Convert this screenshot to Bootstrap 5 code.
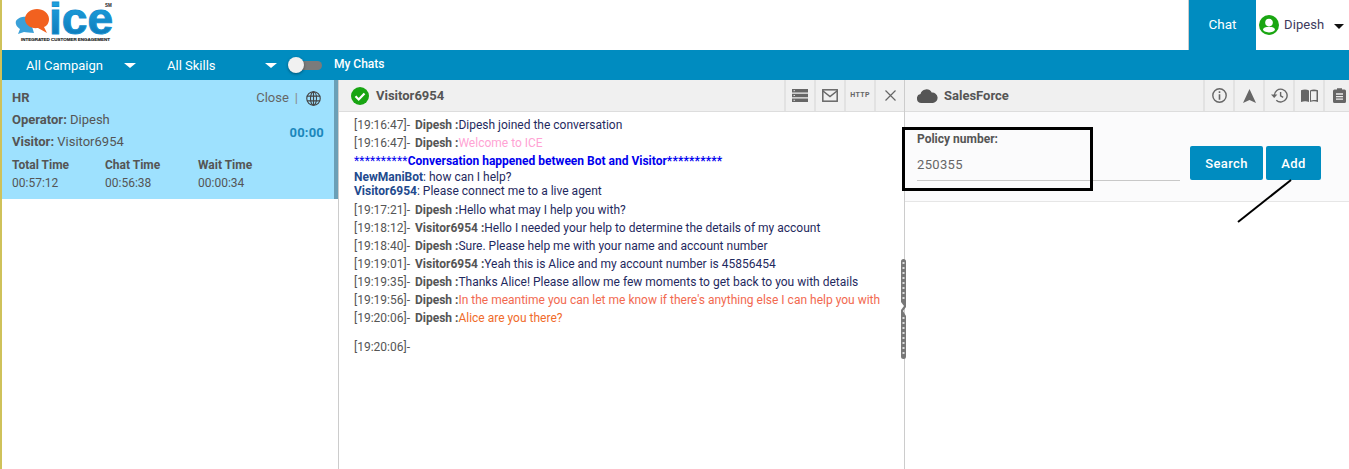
<!DOCTYPE html>
<html lang="en"><head><meta charset="utf-8"><title>ICE Chat</title>
<link rel="stylesheet" href="https://cdn.jsdelivr.net/npm/bootstrap@5.3.0/dist/css/bootstrap.min.css">
<style>
html,body{height:100%;overflow:hidden}
body{font-family:Roboto,"Liberation Sans",sans-serif;font-size:12px;color:#555;background:#fff;border-left:2px solid #cfc25a}
.app-shell{height:469px;position:relative}
.top-bar{height:50px;background:#fff}
.logo-box{width:130px;height:50px;margin-left:-2px}
.chat-tab{width:68px;background:#008cc0;color:#fff;font-size:13.5px;border-left:1px solid #ccc;padding-top:14px;text-align:center;line-height:20px}
.user-box{width:93px;font-size:13px;letter-spacing:.1px;color:#3d3a5c;padding-left:3px}
.user-name{margin-left:5px}
.caret-dark{width:0;height:0;border-left:5px solid transparent;border-right:5px solid transparent;border-top:5px solid #111;margin-left:10px;margin-top:2px}
.filter-bar{height:30px;background:#008cc0;color:#fff;font-size:13px;position:relative}
.flt-label{margin-top:2px}
.caret-white{width:0;height:0;border-left:6px solid transparent;border-right:6px solid transparent;border-top:5px solid #fff}
.toggle-track{width:26px;height:9px;border-radius:5px;background:#7b7b7b;position:relative}
.toggle-knob{position:absolute;left:-8px;top:-3.5px;width:16px;height:16px;border-radius:50%;background:#f1f1f1;box-shadow:0 1px 3px rgba(0,0,0,.4)}
.mychats{font-size:12px;font-weight:500;margin-left:12px;margin-top:-3px}
.panes{height:389px}
.left-pane{width:337px;flex:none;border-right:1px solid #ccc;height:389px}
.visitor-card{height:119px;background:#9ee1fe;border-right:4px solid #6b9fb6;position:relative;padding:9px 10px;line-height:18px}
.visitor-card b{font-weight:700}
.row-line{height:22px;line-height:18px;font-size:13px}
.close-link{position:absolute;right:13px;top:9px;color:#666;font-size:13px;display:flex;align-items:center}
.sep-bar{color:#888;margin:0 8px 0 6px}
.timer{position:absolute;right:10px;top:44px;font-weight:700;font-size:13px;color:#1b87bb;letter-spacing:.2px}
.time-grid{display:grid;grid-template-columns:93px 93px 93px;margin-top:1px;font-size:12px;line-height:18px}
.mid-pane{width:566px;flex:none;border-right:1px solid #ccc;height:389px;position:relative}
.right-pane{flex:1;height:389px;min-width:0}
.pane-head{height:32px;background:#f0f0f0;border-bottom:1px solid #ddd;font-weight:700;font-size:13px;color:#555}
.head-icon{width:30px;height:31px;border-left:2px solid #e2e2e2;flex:none}
.tools-clip{margin-right:-4px}
.chat-log{padding:4px 0 0 15px;font-size:12px;line-height:18px;color:#1f2a60;position:relative}
.msg-t{color:#555}
.msg-n{color:#555;font-weight:700;margin-left:2px}
.msg{height:18px;white-space:nowrap}
.blue-line{color:#0000ee;font-weight:700;height:18px;line-height:18px}
.blue-line i{font-style:normal;font-weight:400;letter-spacing:.2px}
.blue-line em{font-style:normal;letter-spacing:.1px}
.bot-line{line-height:14px;height:14px}
.bot-line b{color:#224a8e}
.pink{color:#ffa3d4}.sal1{color:#f2694f}.sal2{color:#f06b2a}
.search-form{height:90px;background:#fbfbfc;border-bottom:1px solid #e6e6e6;position:relative;padding:18px 12px 0 12px}
.form-label-x{font-weight:700;font-size:12px;color:#555;line-height:18px;margin:0}
.input-x{width:263px;height:33px;border-bottom:1px solid #c8c8c8;font-size:13px;line-height:26px;color:#666;padding-top:4px;letter-spacing:.35px}
.btn-x{background:#008cc0;color:#fff;font-size:13px;font-weight:500;border:0;border-radius:2px;height:34px;padding:2px 0 0;letter-spacing:.35px}
.btn-x:hover{background:#008cc0;color:#fff}
.btn-s{width:73px}.btn-a{width:55px;margin-left:3px}
.annot-box{position:absolute;left:-3px;top:15px;width:191px;height:64px;border:3px solid #000;pointer-events:none}
.annot-line{position:absolute;left:328px;top:66px;pointer-events:none}
.grip{right:-3px;top:179px}
</style></head>
<body>
<div class="app-shell">
 <div class="top-bar d-flex">
  <div class="logo-box">
   <svg width="130" height="50" viewBox="0 0 130 50">
    <path d="M16 21c2-4 8-5 13-4l5 16c-4 0-8-1-10-1l-6 2 2-5c-3-2-5-5-4-8z" fill="#3aa0d8"/>
    <path d="M25 19c0-6 6-10 12-10 6 0 12 4 12 10 0 4-2 7-5 8l3 6-9-5c-7 1-13-3-13-9z" fill="#f2611f"/>
    <defs><linearGradient id="ig" x1="0" y1="0" x2="0" y2="1"><stop offset="0" stop-color="#23ace8"/><stop offset="1" stop-color="#0a72b2"/></linearGradient></defs>
    <text x="49" y="33.5" font-family="Liberation Sans" font-weight="700" font-size="44" fill="url(#ig)" stroke="#1590d0" stroke-width="1" textLength="64" lengthAdjust="spacingAndGlyphs">ice</text>
    <text x="105" y="7" font-family="Liberation Sans" font-weight="700" font-size="4.5" fill="#222">SM</text>
    <text x="21" y="41" font-family="Liberation Sans" font-weight="700" font-size="4.2" fill="#222" stroke="#222" stroke-width=".15" textLength="89" lengthAdjust="spacingAndGlyphs">INTEGRATED CUSTOMER ENGAGEMENT</text>
   </svg>
  </div>
  <div class="ms-auto d-flex">
   <div class="chat-tab">Chat</div>
   <div class="user-box d-flex align-items-center">
    <svg width="20" height="20" viewBox="0 0 20 20"><circle cx="10" cy="10" r="10" fill="#1aa612"/><circle cx="10" cy="7.6" r="3.8" fill="#fff"/><ellipse cx="10" cy="14.6" rx="6" ry="2.8" fill="#fff"/></svg>
    <span class="user-name">Dipesh</span><span class="caret-dark"></span>
   </div>
  </div>
 </div>
 <div class="filter-bar d-flex align-items-center">
  <span class="flt-label" style="margin-left:24px;width:98px">All Campaign</span><span class="caret-white"></span>
  <span class="flt-label" style="margin-left:31px;width:98px">All Skills</span><span class="caret-white"></span>
  <span class="toggle-track" style="margin-left:19px"><span class="toggle-knob"></span></span>
  <span class="mychats">My Chats</span>
 </div>
 <div class="panes d-flex">
  <div class="left-pane">
   <div class="visitor-card">
    <div class="row-line"><b>HR</b></div>
    <div class="row-line"><b>Operator:</b> Dipesh</div>
    <div class="row-line"><b>Visitor:</b> Visitor6954</div>
    <div class="close-link">Close<span class="sep-bar">|</span>
     <svg width="15" height="15" viewBox="0 0 16 16" fill="none" stroke="#444" stroke-width="1.2"><circle cx="8" cy="8" r="7.2"/><ellipse cx="8" cy="8" rx="3.2" ry="7.2"/><path d="M8 .8v14.4M1 5.5h14M1 10.5h14"/></svg>
    </div>
    <div class="timer">00:00</div>
    <div class="time-grid"><b>Total Time</b><b>Chat Time</b><b>Wait Time</b><span>00:57:12</span><span>00:56:38</span><span>00:00:34</span></div>
   </div>
  </div>
  <div class="mid-pane">
   <div class="pane-head d-flex align-items-center">
    <svg style="margin-left:12px;margin-right:7px" width="18" height="18" viewBox="0 0 18 18"><circle cx="9" cy="9" r="9" fill="#18a512"/><path d="M4.5 9.3l3.2 3.2 5.8-6" fill="none" stroke="#fff" stroke-width="2.2"/></svg>
    <span>Visitor6954</span>
    <div class="ms-auto d-flex">
     <div class="head-icon d-flex align-items-center justify-content-center"><svg width="16" height="13" viewBox="0 0 16 13"><path fill="#666" d="M0 0h16v3.4H0zM0 4.8h16v3.4H0zM0 9.6h16V13H0z"/><path stroke="#ddd" d="M1.5 1.7h1.5M1.5 6.5h1.5M1.5 11.3h1.5"/></svg></div>
     <div class="head-icon d-flex align-items-center justify-content-center"><svg width="16" height="13" viewBox="0 0 16 13" fill="none" stroke="#666" stroke-width="1.5"><rect x=".8" y=".8" width="14.4" height="11.4"/><path d="M1 2l7 5.5L15 2"/></svg></div>
     <div class="head-icon d-flex align-items-center justify-content-center" style="font-size:7px;font-weight:700;letter-spacing:.4px;color:#666">HTTP</div>
     <div class="head-icon d-flex align-items-center justify-content-center"><svg width="13" height="13" viewBox="0 0 13 13" stroke="#666" stroke-width="1.2"><path d="M1.5 1.5l10 10M11.5 1.5l-10 10"/></svg></div>
    </div>
   </div>
   <div class="chat-log">
    <div class="msg"><span class="msg-t">[19:16:47]-</span> <span class="msg-n">Dipesh :</span>Dipesh joined the conversation</div>
    <div class="msg"><span class="msg-t">[19:16:47]-</span> <span class="msg-n">Dipesh :</span><span class="pink">Welcome to ICE</span></div>
    <div class="blue-line"><i>**********</i>Conversation happened between Bot and Visitor<em>**********</em></div>
    <div class="bot-line"><b>NewManiBot</b>: how can I help?</div>
    <div class="bot-line"><b>Visitor6954</b>: Please connect me to a live agent</div>
    <div style="height:3px"></div>
    <div class="msg"><span class="msg-t">[19:17:21]-</span> <span class="msg-n">Dipesh :</span>Hello what may I help you with?</div>
    <div class="msg"><span class="msg-t">[19:18:12]-</span> <span class="msg-n">Visitor6954 :</span>Hello I needed your help to determine the details of my account</div>
    <div class="msg"><span class="msg-t">[19:18:40]-</span> <span class="msg-n">Dipesh :</span>Sure. Please help me with your name and account number</div>
    <div class="msg"><span class="msg-t">[19:19:01]-</span> <span class="msg-n">Visitor6954 :</span>Yeah this is Alice and my account number is 45856454</div>
    <div class="msg"><span class="msg-t">[19:19:35]-</span> <span class="msg-n">Dipesh :</span>Thanks Alice! Please allow me few moments to get back to you with details</div>
    <div class="msg"><span class="msg-t">[19:19:56]-</span> <span class="msg-n">Dipesh :</span><span class="sal1">In the meantime you can let me know if there's anything else I can help you with</span></div>
    <div class="msg"><span class="msg-t">[19:20:06]-</span> <span class="msg-n">Dipesh :</span><span class="sal2">Alice are you there?</span></div>
    <div class="msg" style="margin-top:11px"><span class="msg-t">[19:20:06]-</span></div>
   </div>
   <svg class="position-absolute grip" width="7" height="100" viewBox="0 0 7 100"><path fill="#777" d="M1 2.5a2.5 2.5 0 0 1 5 0V48l-3 4 3 5v40.5a2.5 2.5 0 0 1-5 0V51l3-4-3-4z"/><path stroke="#ddd" stroke-width="2" stroke-dasharray="2 3" d="M3.5 3v40M3.5 58v40"/></svg>
  </div>
  <div class="right-pane">
   <div class="pane-head d-flex align-items-center">
    <svg style="margin-left:12px;margin-right:6px" width="21" height="15" viewBox="0 0 21 15"><path fill="#555" d="M4.5 15a4.5 4.5 0 0 1-1-8.9A6 6 0 0 1 14.7 4.6 5.2 5.2 0 0 1 16 15z"/></svg>
    <span>SalesForce</span>
    <div class="ms-auto d-flex tools-clip">
     <div class="head-icon d-flex align-items-center justify-content-center"><svg width="15" height="15" viewBox="0 0 15 15"><circle cx="7.5" cy="7.5" r="6.7" fill="none" stroke="#666" stroke-width="1.4"/><path fill="#666" d="M6.7 3.3h1.6v1.6H6.7zM6.7 6.2h1.6v5.5H6.7z"/></svg></div>
     <div class="head-icon d-flex align-items-center justify-content-center"><svg width="13" height="14" viewBox="0 0 13 14"><path fill="#666" d="M6.5 0L13 14 6.5 11 0 14z"/></svg></div>
     <div class="head-icon d-flex align-items-center justify-content-center"><svg width="17" height="15" viewBox="0 0 17 15" fill="none" stroke="#666" stroke-width="1.4"><path d="M3.3 7.5a6.4 6.4 0 1 1 2 4.7"/><path fill="#666" stroke="none" d="M0 6.5h6.4L3.2 10z"/><path d="M9.6 4v3.8l2.6 1.6"/></svg></div>
     <div class="head-icon d-flex align-items-center justify-content-center"><svg width="17" height="13" viewBox="0 0 17 13"><path fill="#666" d="M0 1.2C2.5.2 6 .2 8 1.4V13c-2-1-5.5-1-8 0z"/><path fill="#666" d="M9 1.4c2-1.2 5.5-1.2 8-.2V13c-2.5-1-6-1-8 0z"/><path fill="#f0f0f0" d="M10 2.2h5.5v8.8c-2 0-4 0-5.5.4z"/></svg></div>
     <div class="head-icon d-flex align-items-center justify-content-center"><svg width="13" height="15" viewBox="0 0 13 15"><path fill="#666" d="M1.5 1.5H4V.3h5v1.2h2.5A1.5 1.5 0 0 1 13 3v10.5a1.5 1.5 0 0 1-1.5 1.5h-10A1.5 1.5 0 0 1 0 13.5V3a1.5 1.5 0 0 1 1.5-1.5z"/><path stroke="#eee" stroke-width="1.3" d="M3 6h7M3 8.6h7M3 11.2h7"/></svg></div>
    </div>
   </div>
   <div class="search-form">
    <div class="annot-box"></div>
    <p class="form-label-x">Policy number:</p>
    <div class="d-flex">
     <div class="input-x">250355</div>
     <div class="d-flex" style="margin-left:10px;margin-top:-2px">
      <button type="button" class="btn btn-x btn-s">Search</button>
      <button type="button" class="btn btn-x btn-a">Add</button>
     </div>
    </div>
    <svg class="annot-line" width="60" height="50" viewBox="0 0 60 50"><path d="M58 2L5 44" stroke="#000" stroke-width="2"/></svg>
   </div>
  </div>
 </div>
</div>
<script src="https://cdn.jsdelivr.net/npm/bootstrap@5.3.0/dist/js/bootstrap.bundle.min.js"></script>
</body></html>
